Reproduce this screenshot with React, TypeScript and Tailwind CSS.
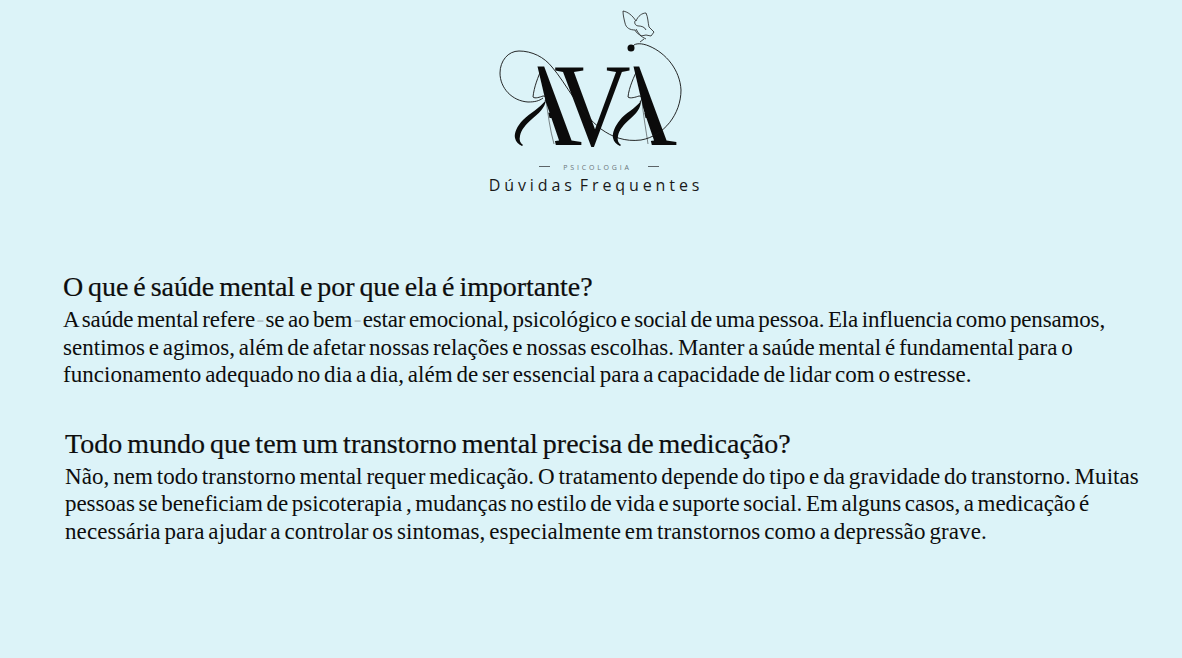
const serif = { fontFamily: "'Liberation Serif', serif" }

const faqs = [
  {
    indent: "pl-[63px]",
    gap: "mt-[75px]",
    titleClass: "tracking-[-0.05px]",
    title: "O que é saúde mental e por que ela é importante?",
    lines: [
      {
        cls: "tracking-[-0.15px]",
        text: <>A saúde mental refere<span className="text-[#b5c6ca] mx-[1.5px]">-</span>se ao bem<span className="text-[#b5c6ca] mx-[1.5px]">-</span>estar emocional, psicológico e social de uma pessoa. Ela influencia como pensamos,</>,
      },
      { cls: "tracking-[0.02px]", text: "sentimos e agimos, além de afetar nossas relações e nossas escolhas. Manter a saúde mental é fundamental para o" },
      { cls: "tracking-[0.03px]", text: "funcionamento adequado no dia a dia, além de ser essencial para a capacidade de lidar com o estresse." },
    ],
  },
  {
    indent: "pl-[65px]",
    gap: "mt-[38px]",
    titleClass: "tracking-[0px]",
    title: "Todo mundo que tem um transtorno mental precisa de medicação?",
    lines: [
      { cls: "tracking-[0.07px]", text: "Não, nem todo transtorno mental requer medicação. O tratamento depende do tipo e da gravidade do transtorno. Muitas" },
      { cls: "tracking-[-0.06px]", text: "pessoas se beneficiam de psicoterapia , mudanças no estilo de vida e suporte social. Em alguns casos, a medicação é" },
      { cls: "tracking-[0.11px]", text: "necessária para ajudar a controlar os sintomas, especialmente em transtornos como a depressão grave." },
    ],
  },
]

function Logo() {
  return (
    <svg width="240" height="176" viewBox="476 0 240 176" className="block">
      <defs>
        {/* keep only the thick stroke of each A, the thin leg is the swash below */}
        <clipPath id="leg1"><path d="M536 60H600V150H557Z" /></clipPath>
        <clipPath id="leg2"><path d="M632 60H696V150H653Z" /></clipPath>
      </defs>
      {/* butterfly */}
      <g fill="none" stroke="#1a1a1a" strokeWidth="0.8">
        <path d="M623 11c5 1 9 4 13 10 2-5 6-8 10-8 2 4 2 10 3 14l5 5-3 4-5-1-5 1c-2-2-5-3-6-6-5 0-9-2-10-7-1-4-2-8-2-12z" />
        <path d="M635 21c-1 3 1 5 4 5 2 0 6 1 7 4" />
        <path d="M636 29c2 4 5 8 10 10" />
        <path d="M644 39l-4 3" />
      </g>
      {/* monogram letters */}
      <g fill="#0b0b0b" style={serif} fontSize="118">
        <g clipPath="url(#leg1)"><text x="497" y="145">A</text></g>
        <text x="554" y="145" transform="translate(554 0) scale(0.9 1) translate(-554 0)">V</text>
        <g clipPath="url(#leg2)"><text x="592" y="145">A</text></g>
      </g>
      {/* swashes */}
      <circle cx="631" cy="48" r="3.500" fill="#0b0b0b" />
      <g fill="none" stroke="#111" strokeWidth="0.9">
        <path d="M633 46c2-3 9-3 16 0 17 7 31 24 32 44 0 24-17 46-40 50-16 2-29-3-40-11-21-16-35-46-49-62-8-10-20-16-33-16-11 0-19 10-19 22 0 15 12 28 28 29 7 0 11-1 15-4" />
        <path d="M542 68c-4 9-8 19-9 29 2 2 7 0 10-1 3 0 4 2 2 5" />
        <path d="M638 68c-4 9-9 19-10 29 2 2 8 0 11-1 3 0 4 2 1 6" />
      </g>
      <g fill="none" stroke="#111" strokeWidth="0.5">
        <path d="M546 100c2 14 4 30 8 44" />
        <path d="M642 100c1 14 4 30 6 44" />
      </g>
      {/* thick ends of the swashes */}
      <g fill="#0b0b0b">
        <path d="M546 100c-6 8-16 13-23 20-6 6-9 13-8 18 1 4 3 6 7 8l1-1c-3-2-4-5-3-9 1-6 6-12 12-17 6-5 13-11 14-19z" />
        <path d="M641 101c-6 8-16 12-21 19-5 6-8 13-7 18 1 4 3 6 7 8l1-1c-3-2-4-5-3-9 1-6 6-12 12-17 6-5 11-11 11-18z" />
      </g>
      <g fill="#5c6468">
        <rect x="539" y="166" width="11" height="1" />
        <rect x="648" y="166" width="11" height="1" />
      </g>
      <text x="597.500" y="170" textAnchor="middle" fontSize="7" letterSpacing="2.8" fill="#6b7478" style={{ fontFamily: "'Open Sans', sans-serif" }}>PSICOLOGIA</text>
    </svg>
  )
}

export default function App() {
  return (
    <div className="min-h-[658px] bg-[#dcf3f8] text-[#0d0d0d] overflow-hidden">
      <header className="flex flex-col items-center pl-[10px]">
        <Logo />
        <h1 className="text-[16px] leading-[20px] tracking-[3.9px] [word-spacing:-4px] -mt-[1px] text-[#1a1a1a] whitespace-nowrap" style={{ fontFamily: "'Open Sans', sans-serif" }}>
          Dúvidas Frequentes
        </h1>
      </header>

      <main style={serif}>
        {faqs.map((f) => (
          <section key={f.title} className={`${f.indent} ${f.gap} whitespace-nowrap`}>
            <h2 className={`text-[28px] leading-[34px] [word-spacing:-2px] mb-[2px] [-webkit-text-stroke:0.2px] ${f.titleClass}`}>{f.title}</h2>
            {f.lines.map((line, i) => (
              <p key={i} className={`text-[23px] leading-[27.500px] [word-spacing:-2px] ${line.cls}`}>{line.text}</p>
            ))}
          </section>
        ))}
      </main>
    </div>
  )
}
